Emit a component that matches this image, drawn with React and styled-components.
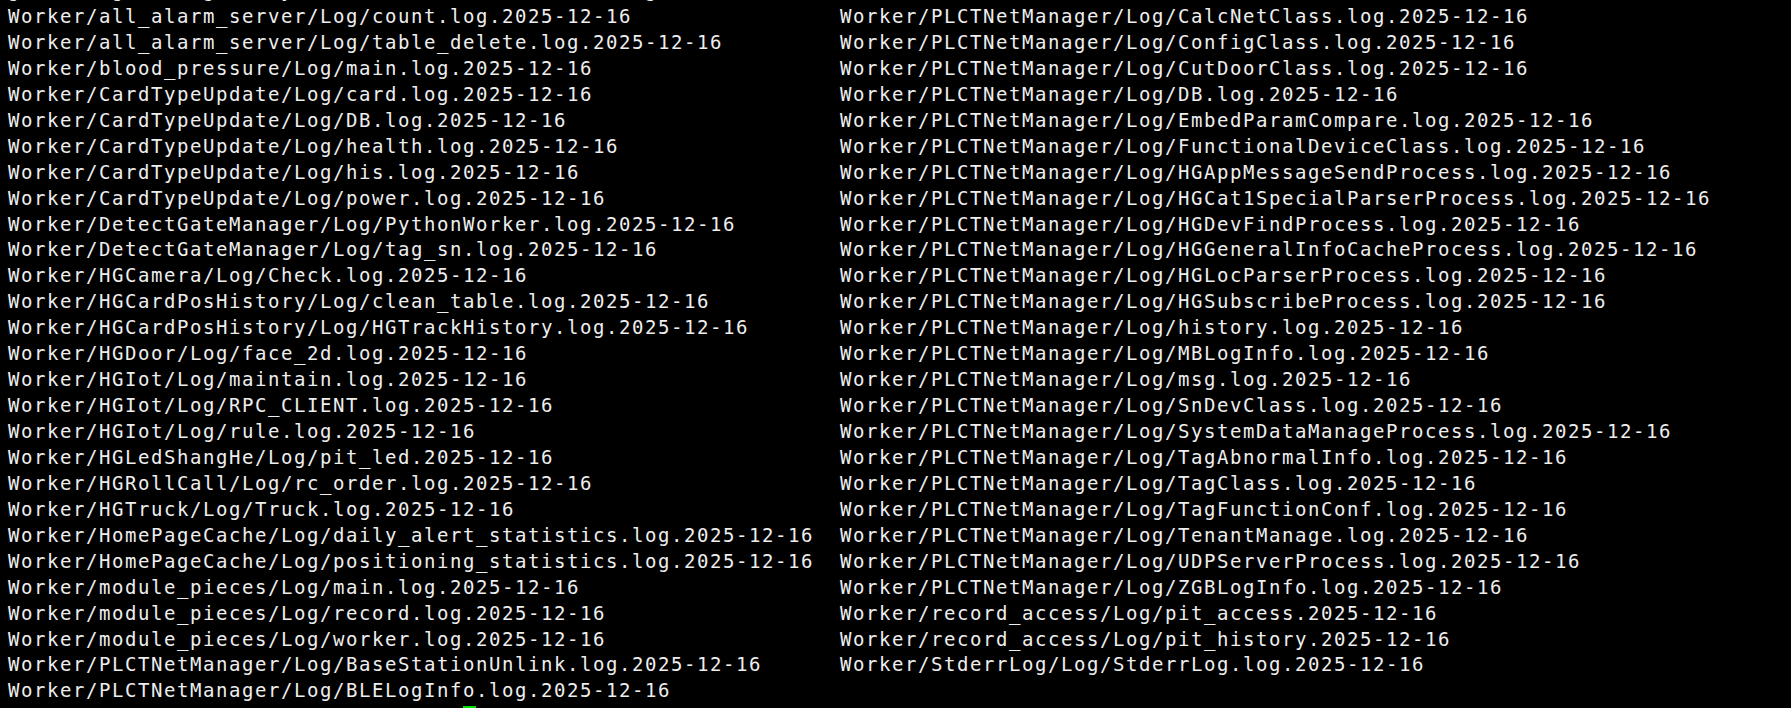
import styled, { createGlobalStyle } from "styled-components";

const GlobalStyle = createGlobalStyle`
  html, body {
    margin: 0;
    padding: 0;
    background: #000;
    overflow: hidden;
  }
`;

const left = [
  "Worker/all_alarm_server/Log/count.log.2025-12-16",
  "Worker/all_alarm_server/Log/table_delete.log.2025-12-16",
  "Worker/blood_pressure/Log/main.log.2025-12-16",
  "Worker/CardTypeUpdate/Log/card.log.2025-12-16",
  "Worker/CardTypeUpdate/Log/DB.log.2025-12-16",
  "Worker/CardTypeUpdate/Log/health.log.2025-12-16",
  "Worker/CardTypeUpdate/Log/his.log.2025-12-16",
  "Worker/CardTypeUpdate/Log/power.log.2025-12-16",
  "Worker/DetectGateManager/Log/PythonWorker.log.2025-12-16",
  "Worker/DetectGateManager/Log/tag_sn.log.2025-12-16",
  "Worker/HGCamera/Log/Check.log.2025-12-16",
  "Worker/HGCardPosHistory/Log/clean_table.log.2025-12-16",
  "Worker/HGCardPosHistory/Log/HGTrackHistory.log.2025-12-16",
  "Worker/HGDoor/Log/face_2d.log.2025-12-16",
  "Worker/HGIot/Log/maintain.log.2025-12-16",
  "Worker/HGIot/Log/RPC_CLIENT.log.2025-12-16",
  "Worker/HGIot/Log/rule.log.2025-12-16",
  "Worker/HGLedShangHe/Log/pit_led.2025-12-16",
  "Worker/HGRollCall/Log/rc_order.log.2025-12-16",
  "Worker/HGTruck/Log/Truck.log.2025-12-16",
  "Worker/HomePageCache/Log/daily_alert_statistics.log.2025-12-16",
  "Worker/HomePageCache/Log/positioning_statistics.log.2025-12-16",
  "Worker/module_pieces/Log/main.log.2025-12-16",
  "Worker/module_pieces/Log/record.log.2025-12-16",
  "Worker/module_pieces/Log/worker.log.2025-12-16",
  "Worker/PLCTNetManager/Log/BaseStationUnlink.log.2025-12-16",
  "Worker/PLCTNetManager/Log/BLELogInfo.log.2025-12-16",
];

const right = [
  "Worker/PLCTNetManager/Log/CalcNetClass.log.2025-12-16",
  "Worker/PLCTNetManager/Log/ConfigClass.log.2025-12-16",
  "Worker/PLCTNetManager/Log/CutDoorClass.log.2025-12-16",
  "Worker/PLCTNetManager/Log/DB.log.2025-12-16",
  "Worker/PLCTNetManager/Log/EmbedParamCompare.log.2025-12-16",
  "Worker/PLCTNetManager/Log/FunctionalDeviceClass.log.2025-12-16",
  "Worker/PLCTNetManager/Log/HGAppMessageSendProcess.log.2025-12-16",
  "Worker/PLCTNetManager/Log/HGCat1SpecialParserProcess.log.2025-12-16",
  "Worker/PLCTNetManager/Log/HGDevFindProcess.log.2025-12-16",
  "Worker/PLCTNetManager/Log/HGGeneralInfoCacheProcess.log.2025-12-16",
  "Worker/PLCTNetManager/Log/HGLocParserProcess.log.2025-12-16",
  "Worker/PLCTNetManager/Log/HGSubscribeProcess.log.2025-12-16",
  "Worker/PLCTNetManager/Log/history.log.2025-12-16",
  "Worker/PLCTNetManager/Log/MBLogInfo.log.2025-12-16",
  "Worker/PLCTNetManager/Log/msg.log.2025-12-16",
  "Worker/PLCTNetManager/Log/SnDevClass.log.2025-12-16",
  "Worker/PLCTNetManager/Log/SystemDataManageProcess.log.2025-12-16",
  "Worker/PLCTNetManager/Log/TagAbnormalInfo.log.2025-12-16",
  "Worker/PLCTNetManager/Log/TagClass.log.2025-12-16",
  "Worker/PLCTNetManager/Log/TagFunctionConf.log.2025-12-16",
  "Worker/PLCTNetManager/Log/TenantManage.log.2025-12-16",
  "Worker/PLCTNetManager/Log/UDPServerProcess.log.2025-12-16",
  "Worker/PLCTNetManager/Log/ZGBLogInfo.log.2025-12-16",
  "Worker/record_access/Log/pit_access.2025-12-16",
  "Worker/record_access/Log/pit_history.2025-12-16",
  "Worker/StderrLog/Log/StderrLog.log.2025-12-16",
];

// previous line is scrolled off, only its descenders peek in
const scrolledLine = "g       g      g     y                           g";

const ROW = 25.94;

const Terminal = styled.div`
  padding: 4px 0 0 8px;
  margin-top: -${ROW}px;
  font-family: "DejaVu Sans Mono", "Liberation Mono", monospace;
  font-size: 19px;
  letter-spacing: 1.56px;
  line-height: ${ROW}px;
  color: #eeeeee;
  white-space: pre;
`;

const Line = styled.div`
  height: ${ROW}px;
`;

const Columns = styled.div`
  display: flex;
`;

const Column = styled.div`
  width: ${(p) => p.$chars * 13}px;
  flex-shrink: 0;
`;

const CursorRow = styled.div`
  height: ${ROW}px;
  padding-left: ${35 * 13}px;
`;

const Cursor = styled.div`
  width: 13px;
  height: 22px;
  margin-top: 2px;
  background: #00e000;
`;

export default function App() {
  return (
    <>
      <GlobalStyle />
      <Terminal>
        <Line>{scrolledLine}</Line>
        <Columns>
          <Column $chars={64}>
            {left.map((name) => (
              <Line key={name}>{name}</Line>
            ))}
          </Column>
          <Column $chars={70}>
            {right.map((name) => (
              <Line key={name}>{name}</Line>
            ))}
          </Column>
        </Columns>
        <CursorRow>
          <Cursor />
        </CursorRow>
      </Terminal>
    </>
  );
}
